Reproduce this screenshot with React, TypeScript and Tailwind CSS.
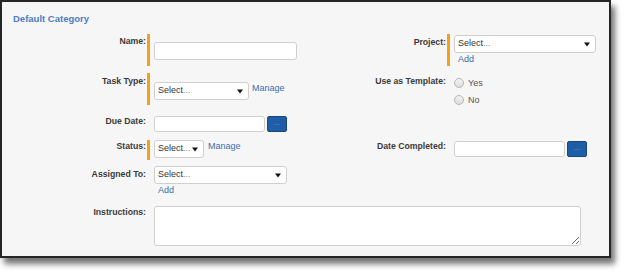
import React from "react";

const FONT = { fontFamily: '"Liberation Sans", Arial, sans-serif' };

function Label({ text, pt = 0 }: { text: string; pt?: number }) {
  const ptClass = ["pt-0", "pt-px", "pt-[2px]", "pt-[3px]"][pt];
  return (
    <div className={`w-[144px] shrink-0 text-right text-[8.7px] leading-[10px] font-bold text-[#3a3a3a] ${ptClass}`}>
      {text}
    </div>
  );
}

function Bar({ show, h }: { show: boolean; h: string }) {
  return <div className={`ml-px w-[3px] shrink-0 ${h} ${show ? "bg-[#f5a01a]" : ""}`} />;
}

function Arrow() {
  return (
    <svg width="6" height="5" viewBox="0 0 6 5" className="shrink-0">
      <path d="M0 0.5 L6 0.5 L3 4.5 Z" fill="#111" />
    </svg>
  );
}

function Select({ w, extra = "" }: { w: string; extra?: string }) {
  return (
    <div
      className={`${w} h-[18px] ${extra} flex items-center justify-between rounded-[3px] border border-[#cfcfcf] bg-white pl-[3px] pr-[5px] text-[9px] text-[#333]`}
    >
      <span>
        Select<span className="text-[#888]">...</span>
      </span>
      <Arrow />
    </div>
  );
}

function TextInput({ w, h, extra = "" }: { w: string; h: string; extra?: string }) {
  return <div className={`${w} ${h} ${extra} rounded-[3px] border border-[#cfcfcf] bg-white`} />;
}

function DotsButton() {
  return (
    <div className="ml-[2px] flex h-[16px] w-[20px] items-center justify-center rounded-[2px] border border-[#17497f] bg-[#1f5ea6]">
      <span className="text-[6px] leading-[6px] text-[#9fc0e6]">···</span>
    </div>
  );
}

function Link({ children, extra = "" }: { children: React.ReactNode; extra?: string }) {
  return <span className={`text-[9px] leading-[10px] text-[#3c6ea8] ${extra}`}>{children}</span>;
}

function Radio({ text }: { text: string }) {
  return (
    <div className="flex h-[10px] items-center">
      <span className="h-[10px] w-[10px] rounded-full border border-[#b5b5b5] bg-gradient-to-b from-[#f4f4f4] to-[#dcdcdc]" />
      <span className="ml-[4px] text-[9px] leading-[10px] text-[#555]">{text}</span>
    </div>
  );
}

export default function App() {
  return (
    <div className="h-[273px] w-[624px] bg-white" style={FONT}>
      <div className="flex h-[258px] w-[611px] flex-col border-2 border-[#262626] bg-[#f6f6f6] shadow-[4px_6px_6px_rgba(0,0,0,0.55)]">
        <div className="ml-[11px] mt-[11px] text-[9.5px] font-bold leading-[11px] text-[#4b7dc2]">Default Category</div>

        {/* Row 1 */}
        <div className="mt-[10px] flex h-[32px]">
          <div className="flex w-[300px]">
            <Label text="Name:" pt={2} />
            <Bar show h="h-[32px]" />
            <div className="ml-[4px] mt-[8px]">
              <TextInput w="w-[143px]" h="h-[18px]" />
            </div>
          </div>
          <div className="flex w-[300px]">
            <Label text="Project:" pt={3} />
            <Bar show h="h-[32px]" />
            <div className="ml-[4px] mt-px flex flex-col">
              <Select w="w-[142px]" />
              <Link extra="mt-px ml-[4px]">Add</Link>
            </div>
          </div>
        </div>

        {/* Row 2 */}
        <div className="mt-[7px] flex h-[32px]">
          <div className="flex w-[300px]">
            <Label text="Task Type:" pt={3} />
            <Bar show h="h-[32px]" />
            <div className="ml-[4px] mt-[9px] flex items-start">
              <Select w="w-[95px]" />
              <Link extra="ml-[3px] mt-px">Manage</Link>
            </div>
          </div>
          <div className="flex w-[300px]">
            <Label text="Use as Template:" pt={3} />
            <Bar show={false} h="h-[32px]" />
            <div className="ml-[4px] mt-[5px] flex flex-col gap-[7px]">
              <Radio text="Yes" />
              <Radio text="No" />
            </div>
          </div>
        </div>

        {/* Row 3 */}
        <div className="mt-[11px] flex h-[16px]">
          <div className="flex w-[300px]">
            <Label text="Due Date:" pt={0} />
            <Bar show={false} h="h-[16px]" />
            <div className="ml-[4px] flex">
              <TextInput w="w-[111px]" h="h-[16px]" />
              <DotsButton />
            </div>
          </div>
        </div>

        {/* Row 4 */}
        <div className="mt-[8px] flex h-[20px]">
          <div className="flex w-[300px]">
            <Label text="Status:" pt={1} />
            <Bar show h="h-[20px]" />
            <div className="ml-[4px] flex items-start">
              <Select w="w-[50px]" />
              <Link extra="ml-[4px] mt-px">Manage</Link>
            </div>
          </div>
          <div className="flex w-[300px]">
            <Label text="Date Completed:" pt={1} />
            <Bar show={false} h="h-[20px]" />
            <div className="ml-[4px] mt-px flex">
              <TextInput w="w-[111px]" h="h-[16px]" />
              <DotsButton />
            </div>
          </div>
        </div>

        {/* Row 5 */}
        <div className="mt-[6px] flex">
          <div className="flex w-[300px]">
            <Label text="Assigned To:" pt={3} />
            <Bar show={false} h="h-[18px]" />
            <div className="ml-[4px] flex flex-col">
              <Select w="w-[133px]" />
              <Link extra="mt-px ml-[4px]">Add</Link>
            </div>
          </div>
        </div>

        {/* Row 6 */}
        <div className="mt-[11px] flex">
          <Label text="Instructions:" pt={1} />
          <Bar show={false} h="h-[40px]" />
          <div className="ml-[4px]">
            <textarea className="block h-[40px] w-[427px] rounded-[3px] border border-[#cfcfcf] bg-white outline-none" />
          </div>
        </div>
      </div>
    </div>
  );
}
